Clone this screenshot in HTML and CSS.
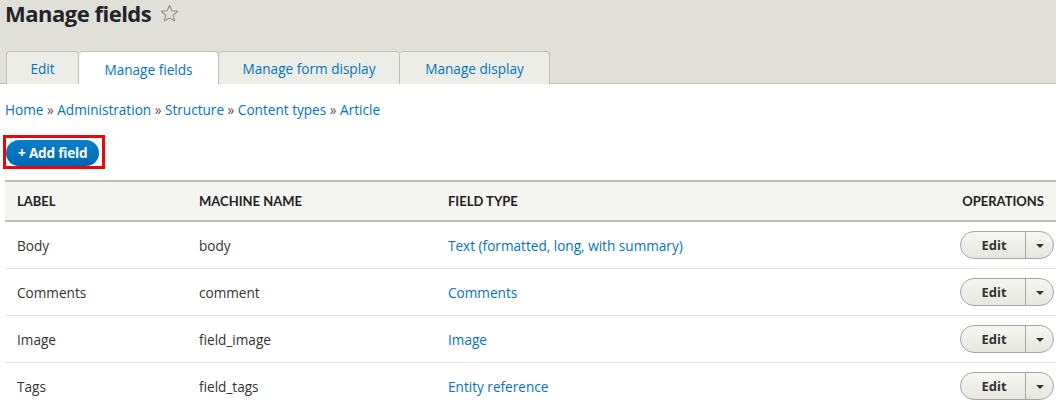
FILE: index.html
```html
<!DOCTYPE html>
<html lang="en">
<head>
    <meta charset="UTF-8">
    <title>Manage fields</title>
    <link rel="stylesheet" href="styles.css">
</head>
<body>
    <div class="header">
        <h1 class="page-title">Manage fields
            <svg class="star" width="19" height="19" viewBox="0 0 20 20"><path d="M10 1.5l2.5 5.6 6.1.6-4.6 4.1 1.3 6-5.3-3.1-5.3 3.1 1.3-6-4.6-4.1 6.1-.6z" fill="none" stroke="#8c8c86" stroke-width="1.1" stroke-linejoin="round"/></svg>
        </h1>
        <ul class="tabs">
            <li class="tab"><a href="#">Edit</a></li>
            <li class="tab active"><a href="#">Manage fields</a></li>
            <li class="tab"><a href="#">Manage form display</a></li>
            <li class="tab"><a href="#">Manage display</a></li>
        </ul>
    </div>

    <div class="content">
        <nav class="breadcrumb">
            <a href="#">Home</a> » <a href="#">Administration</a> » <a href="#">Structure</a> » <a href="#">Content types</a> » <a href="#">Article</a>
        </nav>

        <div class="action">
            <span class="highlight"><a class="button-add" href="#">+ Add field</a></span>
        </div>

        <table class="fields">
            <thead>
                <tr>
                    <th class="col-label">Label</th>
                    <th class="col-machine">Machine name</th>
                    <th class="col-type">Field type</th>
                    <th class="col-ops">Operations</th>
                </tr>
            </thead>
            <tbody>
                <tr>
                    <td>Body</td>
                    <td>body</td>
                    <td><a href="#">Text (formatted, long, with summary)</a></td>
                    <td class="ops"><span class="dropbutton"><span class="drop-main">Edit</span><span class="drop-toggle"></span></span></td>
                </tr>
                <tr>
                    <td>Comments</td>
                    <td>comment</td>
                    <td><a href="#">Comments</a></td>
                    <td class="ops"><span class="dropbutton"><span class="drop-main">Edit</span><span class="drop-toggle"></span></span></td>
                </tr>
                <tr>
                    <td>Image</td>
                    <td>field_image</td>
                    <td><a href="#">Image</a></td>
                    <td class="ops"><span class="dropbutton"><span class="drop-main">Edit</span><span class="drop-toggle"></span></span></td>
                </tr>
                <tr>
                    <td>Tags</td>
                    <td>field_tags</td>
                    <td><a href="#">Entity reference</a></td>
                    <td class="ops"><span class="dropbutton"><span class="drop-main">Edit</span><span class="drop-toggle"></span></span></td>
                </tr>
            </tbody>
        </table>
    </div>
</body>
</html>
```

FILE: styles.css
```css
body {
    margin: 0;
    font-family: "Open Sans", "Noto Sans", sans-serif;
    font-size: 13.6px;
    color: #333;
    background: #fff;
}

a {
    color: #0074bd;
    text-decoration: none;
}

.header {
    background: #e0e0d8;
    border-bottom: 1px solid #bfbfba;
    padding: 0 0 0 6px;
    height: 84px;
    box-sizing: border-box;
}

.page-title {
    margin: 0 0 0 -1px;
    height: 51px;
    font-size: 22px;
    line-height: 27px;
    font-weight: 700;
    color: #232429;
    letter-spacing: -0.5px;
    display: flex;
    align-items: flex-start;
    gap: 9px;
}

.star {
    margin-top: 4px;
}

.tabs {
    list-style: none;
    margin: 0;
    padding: 0;
    display: flex;
    height: 33px;
}

.tab {
    background: #edede7;
    border: 1px solid #bfbfba;
    border-bottom: none;
    border-left: none;
    border-radius: 4px 4px 0 0;
    height: 33px;
    box-sizing: border-box;
    display: flex;
    align-items: center;
    justify-content: center;
}

.tab:first-child {
    border-left: 1px solid #bfbfba;
    width: 73px;
}

.tab:nth-child(2) {
    width: 140px;
}

.tab:nth-child(3) {
    width: 181px;
}

.tab:nth-child(4) {
    width: 150px;
}

.tab.active {
    background: #fff;
    height: 34px;
    position: relative;
    z-index: 1;
}

.tab a {
    font-size: 13.6px;
    padding-top: 1px;
}

.content {
    padding: 0 0 0 5px;
}

.breadcrumb {
    padding-top: 16px;
    height: 51px;
    color: #555;
    box-sizing: border-box;
}

.action {
    height: 45px;
    margin-left: -2px;
}

.highlight {
    display: inline-block;
    border: 3px solid #e8070d;
    padding: 2px 3px 0 0;
}

.button-add {
    display: block;
    height: 26px;
    line-height: 26px;
    padding: 0 12px 0 12px;
    border-radius: 14px;
    background: linear-gradient(#0a80cb, #0067b0);
    color: #fff;
    font-weight: 700;
    font-size: 13.6px;
    letter-spacing: -0.2px;
}

.fields {
    width: 100%;
    border-collapse: collapse;
}

.fields th {
    background: #f5f5f2;
    border-top: 2px solid #bfbfba;
    border-bottom: 2px solid #bfbfba;
    height: 38px;
    text-align: left;
    text-transform: uppercase;
    font-family: Lato, "Open Sans", sans-serif;
    font-weight: 700;
    font-size: 13px;
    color: #222;
    padding: 0 12px;
}

.fields th.col-label {
    width: 158px;
}

.fields th.col-machine {
    width: 225px;
}

.fields th.col-ops {
    text-align: right;
}

.fields td {
    height: 46px;
    border-bottom: 1px solid #e6e4df;
    padding: 0 12px;
    color: #333;
}

.fields td.ops {
    text-align: right;
    padding-right: 2px;
}

.dropbutton {
    display: inline-flex;
    height: 28px;
    border: 1px solid #a6a6a6;
    border-radius: 15px;
    background: linear-gradient(#f6f6f3, #e7e7df);
    box-sizing: border-box;
    vertical-align: middle;
}

.drop-main {
    width: 62px;
    display: flex;
    align-items: center;
    justify-content: center;
    font-weight: 700;
    font-size: 13px;
    color: #333;
    border-right: 1px solid #a6a6a6;
    padding-left: 2px;
}

.drop-toggle {
    width: 27px;
    position: relative;
}

.drop-toggle::after {
    content: "";
    position: absolute;
    left: 10px;
    top: 12px;
    border-left: 4px solid transparent;
    border-right: 4px solid transparent;
    border-top: 4px solid #333;
}
```
